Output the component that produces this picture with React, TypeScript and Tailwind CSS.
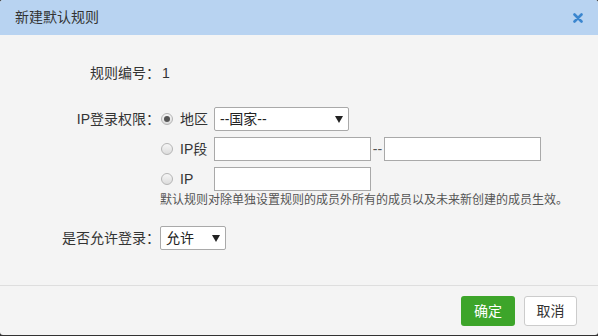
import React, { useState } from 'react'

// ── Constantes ─────────────────────────────────────────────────────────
const font = 'font-["Liberation_Sans","Noto_Sans_CJK_SC",sans-serif]'
const inputCls = 'h-[24px] w-[157px] border border-[#a9a9a9] bg-white px-1 text-[13px] text-[#333] outline-none'

function Radio({ checked, onClick }: { checked: boolean; onClick: () => void }) {
  return (
    <button
      type="button"
      onClick={onClick}
      className="flex h-[12px] w-[12px] items-center justify-center rounded-full border border-[#b5b5b5] bg-gradient-to-b from-[#f6f6f6] to-[#dcdcdc]"
    >
      {checked && <span className="h-[6px] w-[6px] rounded-full bg-[#555]" />}
    </button>
  )
}

function Arrow() {
  return (
    <svg width="8" height="7" viewBox="0 0 8 7" className="shrink-0">
      <path d="M0 0 H8 L4 7 Z" fill="#222" />
    </svg>
  )
}

export default function App() {
  const [modo, setModo] = useState<'area' | 'seg' | 'ip'>('area')

  return (
    <div className={`h-[336px] w-[598px] bg-[#333] ${font}`}>
      <div className="flex h-[335px] w-full flex-col overflow-hidden rounded-[3px] bg-[#f4f4f4] text-[14px] text-[#333]">
        {/* Header */}
        <div className="flex h-[35px] shrink-0 items-center justify-between bg-[#b8d3f1] pl-[15px] pr-[15px]">
          <span className="text-[14px] text-[#333]">新建默认规则</span>
          <svg width="10" height="10" viewBox="0 0 10 10">
            <path d="M1.5 1.5 L8.5 8.5 M8.5 1.5 L1.5 8.5" stroke="#3b86cf" strokeWidth="2.6" strokeLinecap="round" />
          </svg>
        </div>

        {/* Cuerpo */}
        <div className="flex-1 pt-[26px]">
          <div className="flex h-[24px] items-center">
            <span className="w-[160px] text-right">规则编号：</span>
            <span className="pl-[2px]">1</span>
          </div>

          <div className="mt-[22px] flex">
            <span className="flex h-[24px] w-[160px] items-center justify-end">IP登录权限：</span>
            <div className="flex flex-col gap-[6px]">
              <div className="flex h-[24px] items-center">
                <span className="ml-[1px]"><Radio checked={modo === 'area'} onClick={() => setModo('area')} /></span>
                <span className="ml-[7px] w-[34px]">地区</span>
                <div className="flex h-[24px] w-[135px] items-center justify-between rounded-[2px] border border-[#a9a9a9] bg-white pl-[5px] pr-[5px]">
                  <span className="text-[14px] text-[#222]">--国家--</span>
                  <Arrow />
                </div>
              </div>
              <div className="flex h-[24px] items-center">
                <span className="ml-[1px]"><Radio checked={modo === 'seg'} onClick={() => setModo('seg')} /></span>
                <span className="ml-[7px] w-[34px]">IP段</span>
                <input className={inputCls} />
                <span className="w-[13px] text-center text-[#555]">--</span>
                <input className={inputCls} />
              </div>
              <div className="flex h-[24px] items-center">
                <span className="ml-[1px]"><Radio checked={modo === 'ip'} onClick={() => setModo('ip')} /></span>
                <span className="ml-[7px] w-[34px]">IP</span>
                <input className={inputCls} />
              </div>
              <p className="-mt-[6px] h-[18px] text-[12px] leading-[18px] text-[#555]">
                默认规则对除单独设置规则的成员外所有的成员以及未来新创建的成员生效。
              </p>
            </div>
          </div>

          <div className="mt-[17px] flex h-[24px] items-center">
            <span className="w-[160px] text-right">是否允许登录：</span>
            <div className="flex h-[24px] w-[66px] items-center justify-between rounded-[2px] border border-[#a9a9a9] bg-white pl-[5px] pr-[5px]">
              <span className="text-[14px] text-[#222]">允许</span>
              <Arrow />
            </div>
          </div>
        </div>

        {/* Footer */}
        <div className="flex h-[50px] shrink-0 items-start justify-end gap-[9px] border-t border-[#dedede] pr-[21px] pt-[10px]">
          <button className="h-[30px] w-[54px] rounded-[3px] bg-[#3da52a] text-[14px] text-white">确定</button>
          <button className="h-[30px] w-[53px] rounded-[3px] border border-[#ccc] bg-white text-[14px] text-[#333]">取消</button>
        </div>
      </div>
    </div>
  )
}
